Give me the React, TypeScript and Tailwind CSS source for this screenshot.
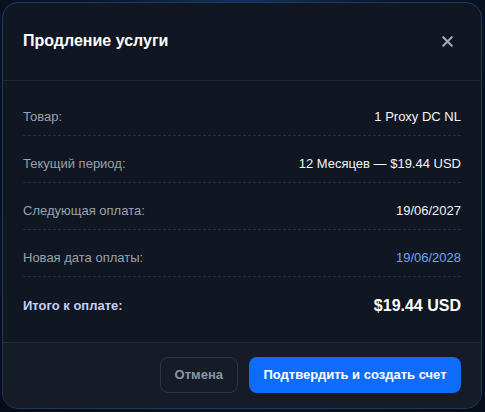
import { X } from 'lucide-react';

const rows = [
  { label: 'Товар:', value: '1 Proxy DC NL' },
  { label: 'Текущий период:', value: '12 Месяцев — $19.44 USD' },
  { label: 'Следующая оплата:', value: '19/06/2027' },
  { label: 'Новая дата оплаты:', value: '19/06/2028', accent: true },
];

export default function App() {
  return (
    <div
      className="w-[485px] h-[412px] overflow-hidden bg-[radial-gradient(ellipse_at_50%_0%,#12305a_0%,#0a1526_45%,#070d18_100%)] pt-[2px] pl-[2px]"
      style={{ fontFamily: '"Liberation Sans", Arial, sans-serif' }}
    >
      <div className="w-[480px] h-[407px] flex flex-col rounded-[16px] border border-[#1d3a66] bg-[#111722] overflow-hidden">
        {/* Header */}
        <div className="flex items-center justify-between px-5 pt-[26px] pb-[27px] border-b border-[#1f2733]">
          <h2 className="text-[16px] leading-6 font-bold text-white">Продление услуги</h2>
          <button className="text-[#a3a9b3] mr-[5px]">
            <X size={17} strokeWidth={3} />
          </button>
        </div>

        {/* Body */}
        <div className="flex flex-col gap-[10px] px-5 pt-[18px] pb-[17px]">
          {rows.map(row => (
            <div
              key={row.label}
              className="flex items-center justify-between py-2 border-b border-dashed border-[#263041]"
            >
              <span className="text-[13px] leading-5 text-[#9aa1ad]">{row.label}</span>
              <span
                className={`text-[13px] leading-5 font-medium ${
                  row.accent ? 'text-[#74a2f4]' : 'text-[#f3f4f6]'
                }`}
              >
                {row.value}
              </span>
            </div>
          ))}
          <div className="flex items-center justify-between py-2">
            <span className="text-[13px] leading-[22px] font-bold text-[#c3cff5]">Итого к оплате:</span>
            <span className="text-[16px] leading-[22px] font-bold text-white">$19.44 USD</span>
          </div>
        </div>

        {/* Footer */}
        <div className="flex flex-1 items-start justify-end gap-[11px] px-5 pt-[14px] border-t border-[#222b38] bg-[#151b27]">
          <button className="h-[36px] px-[14px] rounded-[8px] border border-[#2e3644] text-[13px] font-bold text-[#8e95a1]">
            Отмена
          </button>
          <button className="h-[36px] w-[212px] rounded-[8px] bg-[#0f6cfb] text-[13px] font-bold text-white">
            Подтвердить и создать счет
          </button>
        </div>
      </div>
    </div>
  );
}
